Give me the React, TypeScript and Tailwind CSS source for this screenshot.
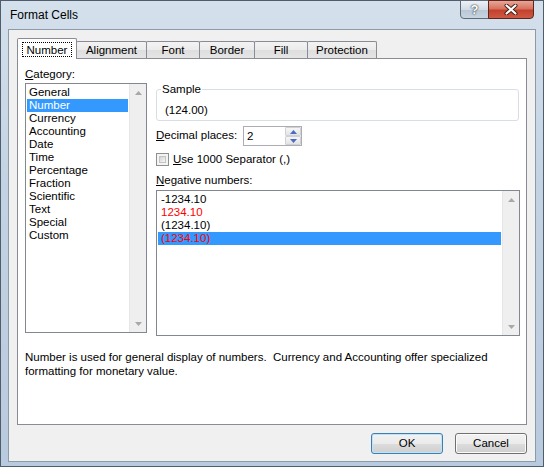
import React from "react";

const categories = [
    "General",
    "Number",
    "Currency",
    "Accounting",
    "Date",
    "Time",
    "Percentage",
    "Fraction",
    "Scientific",
    "Text",
    "Special",
    "Custom",
];

const negatives = [
    { text: "-1234.10", red: false },
    { text: "1234.10", red: true },
    { text: "(1234.10)", red: false },
    { text: "(1234.10)", red: true, selected: true },
];

const tabs = [
    { label: "Number", w: "w-[60px]" },
    { label: "Alignment", w: "w-[71px]" },
    { label: "Font", w: "w-[54px]" },
    { label: "Border", w: "w-[56px]" },
    { label: "Fill", w: "w-[54px]" },
    { label: "Protection", w: "w-[70px]" },
];

const Arrow = ({ up, color = "#a8a8a8" }: { up?: boolean; color?: string }) => (
    <svg width="7" height="4" viewBox="0 0 7 4">
        <path d={up ? "M0 4 L3.5 0 L7 4 Z" : "M0 0 L3.5 4 L7 0 Z"} fill={color} />
    </svg>
);

const ScrollBar = () => (
    <div className="w-[17px] bg-[#efefef] border-l border-[#e6e6e6] flex flex-col justify-between">
        <div className="h-[17px] flex items-center justify-center">
            <Arrow up />
        </div>
        <div className="h-[17px] flex items-center justify-center">
            <Arrow />
        </div>
    </div>
);

export default function App() {
    return (
        <div className="w-[544px] h-[467px] flex flex-col px-[7px] pb-[4px] border border-[#4f5d6c] bg-[linear-gradient(180deg,#d4e0ec_0%,#c3d3e3_40%,#b8cadd_100%)] font-['Liberation_Sans',sans-serif] text-[11.5px] text-black">
            {/* Title bar */}
            <div className="h-[28px] flex justify-between">
                <div className="self-center pl-[2px] text-[12px]">Format Cells</div>
                <div className="flex self-start -mt-px mr-[2px]">
                    <div className="w-[29px] h-[19px] border border-[#5d6b7b] rounded-bl-[4px] bg-[linear-gradient(180deg,#eef2f6_0%,#d2dce6_50%,#b9c7d5_51%,#c8d4e0_100%)] flex items-center justify-center">
                        <span className="text-[13px] font-bold text-white leading-none [text-shadow:0_0_2px_#2c3440,0_0_1px_#2c3440]">
                            ?
                        </span>
                    </div>
                    <div className="w-[46px] h-[19px] -ml-px border border-[#5a2720] rounded-br-[4px] bg-[linear-gradient(180deg,#e9a698_0%,#d6735f_45%,#c4402c_55%,#cd5a44_100%)] flex items-center justify-center">
                        <svg width="14" height="11" viewBox="0 0 14 11">
                            <path d="M2.5 1.5 L11.5 9.5 M11.5 1.5 L2.5 9.5" stroke="#3b1a14" strokeWidth="4" strokeLinecap="round" />
                            <path d="M2.5 1.5 L11.5 9.5 M11.5 1.5 L2.5 9.5" stroke="#ffffff" strokeWidth="2.2" strokeLinecap="round" />
                        </svg>
                    </div>
                </div>
            </div>

            {/* Client area */}
            <div className="flex-1 flex flex-col border border-[#8d9aa8] bg-[#f0f0f0] pt-[8px]">
                {/* Tabs */}
                <div className="h-[20px] flex items-end pl-[8px]">
                    {tabs.map((t, i) =>
                        i === 0 ? (
                            <div
                                key={t.label}
                                className={`${t.w} h-[21px] -mb-px relative z-10 bg-white border border-b-0 border-[#898c95] rounded-t-[2px] flex items-center justify-center pt-[3px]`}
                            >
                                {t.label}
                                <span className="absolute left-[4px] right-[4px] top-[3px] bottom-[2px] border border-dotted border-black" />
                            </div>
                        ) : (
                            <div
                                key={t.label}
                                className={`${t.w} h-[17px] -ml-px border border-b-0 border-[#898c95] rounded-t-[2px] bg-[linear-gradient(180deg,#f3f3f3_0%,#ebebeb_50%,#dedede_51%,#e5e5e5_100%)] flex items-center justify-center pt-[2px]`}
                            >
                                {t.label}
                            </div>
                        )
                    )}
                </div>

                {/* Panel */}
                <div className="mx-[8px] h-[367px] border border-[#898c95] bg-white flex flex-col pt-[9px] pl-[7px] pr-[6px]">
                    <div className="flex gap-[9px]">
                        {/* Category */}
                        <div className="w-[122px] flex flex-col">
                            <div className="h-[13px] leading-[13px]">
                                <span className="underline">C</span>ategory:
                            </div>
                            <div className="mt-[2px] h-[250px] border border-[#828790] flex">
                                <div className="flex-1 pt-[2px] px-[1px]">
                                    {categories.map((c) => (
                                        <div
                                            key={c}
                                            className={`h-[13px] leading-[13px] pl-[2px] ${c === "Number" ? "bg-[#3399ff] text-white" : ""}`}
                                        >
                                            {c}
                                        </div>
                                    ))}
                                </div>
                                <ScrollBar />
                            </div>
                        </div>

                        {/* Right side */}
                        <div className="flex-1 flex flex-col pt-[15px]">
                            <fieldset className="mr-[1px] border border-[#d5dfe5] rounded-[3px] pl-[4px] pb-[3px]">
                                <legend className="px-[1px] leading-[13px]">Sample</legend>
                                <div className="mt-[8px] ml-[4px] leading-[13px]">(124.00)</div>
                            </fieldset>

                            <div className="mt-[5px] h-[20px] flex items-center">
                                <div className="w-[87px]">
                                    <span className="underline">D</span>ecimal places:
                                </div>
                                <div className="w-[59px] h-[20px] border border-[#abadb3] flex bg-white">
                                    <div className="flex-1 pl-[3px] leading-[18px]">2</div>
                                    <div className="w-[16px] flex flex-col">
                                        <div className="h-[9px] border border-[#cfd1d6] rounded-[1px] bg-[linear-gradient(180deg,#f6f6f6,#e3e3e3)] flex items-center justify-center">
                                            <Arrow up color="#4a6cc4" />
                                        </div>
                                        <div className="h-[9px] border border-[#cfd1d6] rounded-[1px] bg-[linear-gradient(180deg,#f6f6f6,#e3e3e3)] flex items-center justify-center">
                                            <Arrow color="#4a6cc4" />
                                        </div>
                                    </div>
                                </div>
                            </div>

                            <div className="mt-[7px] h-[13px] flex items-center">
                                <div className="w-[13px] h-[13px] border border-[#8e8f8f] bg-[#f4f4f4] p-[2px]">
                                    <div className="w-full h-full border border-[#c4c4c4] bg-[linear-gradient(135deg,#d4d4d4,#f6f6f6)]" />
                                </div>
                                <div className="ml-[4px] leading-[13px]">
                                    <span className="underline">U</span>se 1000 Separator (,)
                                </div>
                            </div>

                            <div className="mt-[8px] h-[13px] leading-[13px]">
                                <span className="underline">N</span>egative numbers:
                            </div>
                            <div className="mt-[3px] h-[146px] border border-[#828790] flex">
                                <div className="flex-1 pt-[2px] px-[1px]">
                                    {negatives.map((n, i) => (
                                        <div
                                            key={i}
                                            className={`h-[13px] leading-[13px] pl-[3px] ${n.red ? "text-[#ff0000]" : ""} ${n.selected ? "bg-[#3399ff] text-[#e4002b]" : ""}`}
                                        >
                                            {n.text}
                                        </div>
                                    ))}
                                </div>
                                <ScrollBar />
                            </div>
                        </div>
                    </div>

                    <div className="mt-[14px] leading-[14px] whitespace-pre">
                        {"Number is used for general display of numbers.  Currency and Accounting offer specialized"}
                        <br />
                        {"formatting for monetary value."}
                    </div>
                </div>

                {/* Buttons */}
                <div className="mt-[8px] flex justify-end gap-[12px] pr-[8px]">
                    <button className="w-[72px] h-[21px] rounded-[3px] border border-[#3c7fb1] shadow-[inset_0_0_0_1px_#bfe3f8] bg-[linear-gradient(180deg,#f2f2f2_0%,#ebebeb_50%,#dddddd_51%,#cfcfcf_100%)] leading-none">
                        OK
                    </button>
                    <button className="w-[72px] h-[21px] rounded-[3px] border border-[#707070] shadow-[inset_0_0_0_1px_#fbfbfb] bg-[linear-gradient(180deg,#f2f2f2_0%,#ebebeb_50%,#dddddd_51%,#cfcfcf_100%)] leading-none">
                        Cancel
                    </button>
                </div>
            </div>
        </div>
    );
}
